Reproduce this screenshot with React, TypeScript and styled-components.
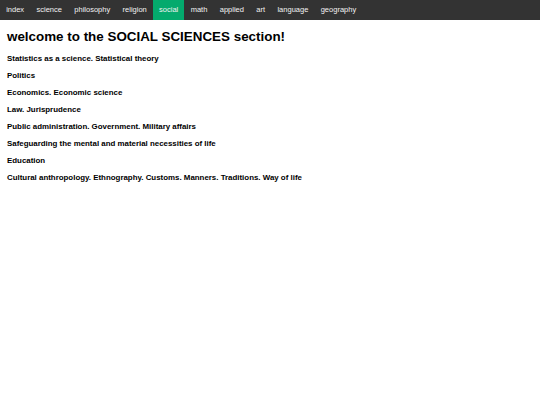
import React from "react";
import styled, { createGlobalStyle } from "styled-components";

const Global = createGlobalStyle`
  html, body { margin: 0; padding: 0; background: #fff; }
  body { font-family: "Liberation Sans", Arial, sans-serif; }
`;

const TopNav = styled.nav`
  display: flex;
  height: 20px;
  background: #333333;
`;

const NavItem = styled.a<{ $active?: boolean }>`
  display: block;
  padding: 0 6.2px;
  line-height: 20px;
  font-size: 7.5px;
  color: #f2f2f2;
  text-decoration: none;
  background: ${(p) => (p.$active ? "#04AA6D" : "transparent")};
`;

const Main = styled.main`
  padding: 0 7px;
`;

const Heading = styled.h1`
  margin: 9px 0 4.5px;
  font-size: 13.4px;
  line-height: 16px;
  font-weight: bold;
  color: #000;
`;

const List = styled.div`
  display: flex;
  flex-direction: column;
`;

const Item = styled.div`
  font-size: 7.9px;
  line-height: 17.1px;
  font-weight: bold;
  color: #000;
`;

const nav = ["index", "science", "philosophy", "religion", "social", "math", "applied", "art", "language", "geography"];
const items = [
  "Statistics as a science. Statistical theory",
  "Politics",
  "Economics. Economic science",
  "Law. Jurisprudence",
  "Public administration. Government. Military affairs",
  "Safeguarding the mental and material necessities of life",
  "Education",
  "Cultural anthropology. Ethnography. Customs. Manners. Traditions. Way of life",
];

export default function App() {
  return (
    <>
      <Global />
      <TopNav>
        {nav.map((n) => (
          <NavItem key={n} $active={n === "social"}>{n}</NavItem>
        ))}
      </TopNav>
      <Main>
        <Heading>welcome to the SOCIAL SCIENCES section!</Heading>
        <List>
          {items.map((t) => (
            <Item key={t}>{t}</Item>
          ))}
        </List>
      </Main>
    </>
  );
}
